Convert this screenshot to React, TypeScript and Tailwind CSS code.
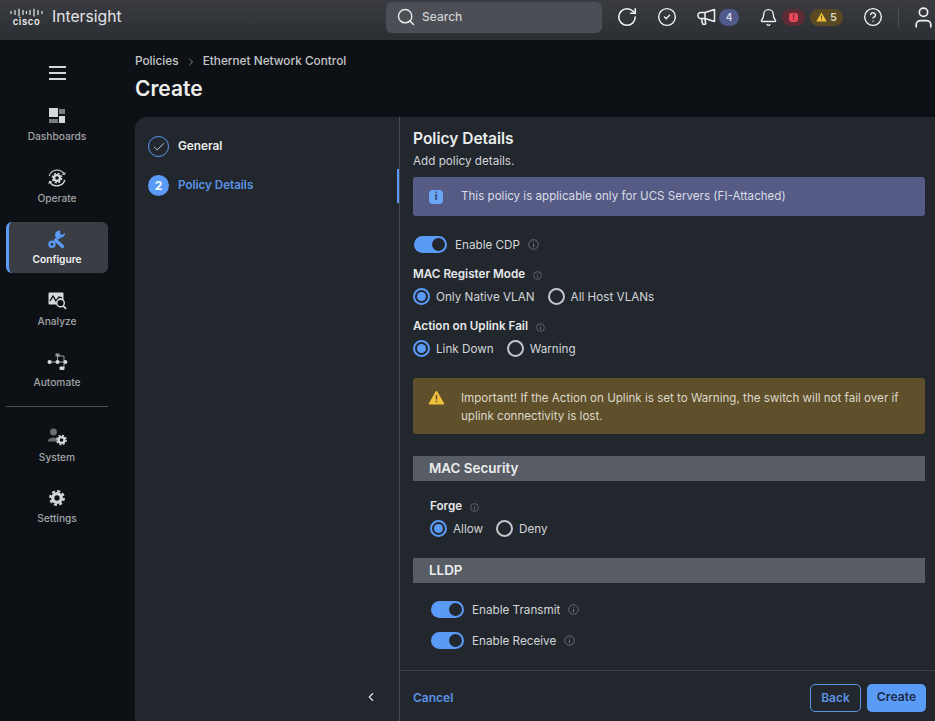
import { Bell, ChevronLeft, ChevronRight, CircleCheck, CircleHelp, Check, RotateCw, Search, User } from 'lucide-react';
import type { ReactNode } from 'react';

const BLUE = '#5b9bf8';

// gear drawn from a ring and a dashed ring for the teeth
const Gear = ({ x = 12, y = 12, k = 1, color = '#d4d6d9' }: { x?: number; y?: number; k?: number; color?: string }) => (
  <g transform={`translate(${x} ${y}) scale(${k})`} fill="none" stroke={color}>
    <circle r="5.2" strokeWidth="4" />
    <circle r="8.2" strokeWidth="2.6" strokeDasharray="3.6 2.84" />
  </g>
);

const MegaphoneIcon = () => (
  <svg width="19" height="18" viewBox="0 0 19 18" fill="none" stroke="#f0f1f2" strokeWidth="1.5" strokeLinejoin="round" className="ml-[20px] shrink-0">
    <path d="M17.5 1.5 V13.5 L8 10.5 H3.5 A2.5 2.5 0 0 1 1 8 V7 A2.5 2.5 0 0 1 3.5 4.5 H8 Z" />
    <path d="M8 4.5 V10.5" />
    <path d="M4.5 10.5 L5.5 15.5 A1 1 0 0 0 6.5 16.3 H7.8 A1 1 0 0 0 8.7 15.2 L7.8 10.5" />
  </svg>
);

const DashboardsIcon = () => (
  <svg width="18" height="18" viewBox="0 0 18 18">
    <rect x="1" y="1" width="9" height="9" fill="#d6d8da" />
    <rect x="11" y="2" width="6" height="5" fill="#777a7e" />
    <rect x="1" y="12" width="9" height="4" fill="#777a7e" />
    <rect x="11" y="9" width="6" height="7" fill="#d6d8da" />
  </svg>
);

const OperateIcon = () => (
  <svg width="22" height="22" viewBox="0 0 24 24" fill="none">
    <path d="M3.5 10 A9 9 0 0 1 20 8" stroke="#b9bbbe" strokeWidth="1.4" />
    <path d="M20.5 14 A9 9 0 0 1 4 16" stroke="#d6d8da" strokeWidth="1.6" />
    <path d="M21.5 5.5 L20.5 9 L17 8 Z" fill="#b9bbbe" />
    <path d="M2.5 18.5 L3.5 15 L7 16 Z" fill="#d6d8da" />
    <Gear k={0.62} />
  </svg>
);

const ConfigureIcon = () => (
  <svg width="20" height="20" viewBox="0 0 20 20" fill="none">
    <path d="M8.5 11 L15.5 17.5" stroke={BLUE} strokeWidth="3.2" strokeLinecap="round" />
    <path d="M13.4 1.5 A4.5 4.5 0 0 0 8.2 7.4 L10.5 11 L14 8.5 A4.5 4.5 0 0 0 18 4 L15.2 6 L12.8 4.6 Z" fill={BLUE} />
    <circle cx="5" cy="15.2" r="2.6" stroke={BLUE} strokeWidth="2.2" />
  </svg>
);

const AnalyzeIcon = () => (
  <svg width="19" height="18" viewBox="0 0 19 18" fill="none">
    <rect x="0.5" y="0.5" width="15" height="12" rx="1" fill="#d6d8da" />
    <path d="M2 9 L5 4 L8 9 L11 5 L14 6" stroke="#0d1115" strokeWidth="1.4" />
    <circle cx="12.5" cy="11" r="3.8" fill="#0d1115" stroke="#d6d8da" strokeWidth="1.4" />
    <path d="M15.2 13.8 L18 16.8" stroke="#d6d8da" strokeWidth="1.7" />
  </svg>
);

const AutomateIcon = () => (
  <svg width="21" height="20" viewBox="0 0 21 20" fill="none">
    <path d="M3 10 H19 M10.5 10 V4 H14 H17 V16 H14" stroke="#9a9c9f" strokeWidth="1" />
    <circle cx="2.6" cy="10" r="2.1" fill="#d6d8da" />
    <circle cx="10.5" cy="10" r="2" fill="#d6d8da" />
    <circle cx="18.4" cy="10" r="2" fill="#d6d8da" />
    <rect x="8.5" y="1.5" width="4" height="3" fill="#9a9c9f" />
    <rect x="12.5" y="14.5" width="5" height="3.4" rx="1" fill="#d6d8da" />
  </svg>
);

const SystemIcon = () => (
  <svg width="20" height="18" viewBox="0 0 20 18">
    <circle cx="6.5" cy="4" r="3.4" fill="#6b6e72" />
    <path d="M1 13 C1 8.5 12 8.5 12 13 V13.5 H1 Z" fill="#6b6e72" />
    <Gear x={14.5} y={12} k={0.56} />
  </svg>
);

const SettingsIcon = () => (
  <svg width="20" height="20" viewBox="0 0 24 24">
    <Gear />
  </svg>
);

const CiscoLogo = () => (
  <div className="flex flex-col items-center w-[33px]">
    <svg width="33" height="9" viewBox="0 0 33 9" fill="none" stroke="#e8e9ea" strokeWidth="1.2" strokeLinecap="round">
      {[
        [1, 3.5, 5.5],
        [5, 2.5, 6.5],
        [9, 1, 8],
        [13, 2.5, 6.5],
        [16.5, 3.5, 5.5],
        [20, 2.5, 6.5],
        [24, 1, 8],
        [28, 2.5, 6.5],
        [32, 3.5, 5.5],
      ].map(([x, a, b]) => (
        <line key={x} x1={x} x2={x} y1={a} y2={b} />
      ))}
    </svg>
    <span className="text-[9.5px] leading-[9px] font-semibold text-[#e8e9ea] tracking-[0.6px]">cisco</span>
  </div>
);

const NavItem = ({ icon, label, active }: { icon: ReactNode; label: string; active?: boolean }) => (
  <div
    className={
      active
        ? 'h-[51px] mx-[6px] rounded-md bg-[#3a3d44] border-l-[3px] border-[#5b9bf8] flex flex-col items-center justify-center gap-[3px] pr-[3px] text-[#f2f3f4] font-semibold'
        : 'h-[51px] mx-[6px] flex flex-col items-center justify-center gap-[3px] text-[#a1a3a6] font-medium'
    }
  >
    <div className="h-[20px] flex items-center justify-center">{icon}</div>
    <span className="text-[10.2px] leading-[14px]">{label}</span>
  </div>
);

const Hint = ({ size = 11 }: { size?: number }) => (
  <svg width={size} height={size} viewBox="0 0 12 12" fill="none" className="shrink-0">
    <circle cx="6" cy="6" r="5.2" stroke="#777b82" strokeWidth="0.9" />
    <path d="M6 5.2 V9 M6 3 V4" stroke="#777b82" strokeWidth="1" />
  </svg>
);

const Toggle = () => (
  <div className="w-[33px] h-[17px] rounded-full bg-[#5b9bf8] flex items-center justify-end pr-[2px]">
    <div className="w-[13px] h-[13px] rounded-full bg-[#22272e]" />
  </div>
);

const ToggleRow = ({ label, className = '' }: { label: string; className?: string }) => (
  <div className={`flex items-center h-[17px] ${className}`}>
    <Toggle />
    <span className="ml-2 pt-px text-[11.7px] leading-[17px] text-[#d3d5d8]">{label}</span>
    <span className="ml-2 flex"><Hint /></span>
  </div>
);

const Radio = ({ label, on }: { label: string; on?: boolean }) => (
  <div className="flex items-center h-[17px]">
    {on ? (
      <div className="w-[17px] h-[17px] rounded-full border-2 border-[#5b9bf8] flex items-center justify-center">
        <div className="w-[9px] h-[9px] rounded-full bg-[#5b9bf8]" />
      </div>
    ) : (
      <div className="w-[17px] h-[17px] rounded-full border-2 border-[#c4c6c9]" />
    )}
    <span className="ml-[6px] pt-px text-[11.7px] leading-[17px] text-[#d3d5d8]">{label}</span>
  </div>
);

const FieldLabel = ({ text, className = '' }: { text: string; className?: string }) => (
  <div className={`flex items-center h-[16px] ${className}`}>
    <span className="text-[11.7px] font-semibold text-[#e6e7e9]">{text}</span>
    <span className="ml-2 flex"><Hint size={9} /></span>
  </div>
);

const SectionBar = ({ text, className = '' }: { text: string; className?: string }) => (
  <div className={`h-[25px] bg-[#575c65] pl-[16px] flex items-center text-[13.4px] font-semibold text-[#eceded] ${className}`}>{text}</div>
);

export default function App() {
  return (
    <div className="w-[935px] h-[721px] overflow-hidden bg-[#0d1115] flex flex-col font-['Inter',sans-serif]">
      <header className="h-10 shrink-0 pb-[6px] bg-gradient-to-b from-[#3a3c41] to-[#2b2e33] flex items-center">
        <div className="w-[386px] shrink-0 flex items-center pl-[10px]">
          <CiscoLogo />
          <span className="ml-[9px] text-[15.7px] text-[#e4e5e7]">Intersight</span>
        </div>
        <div className="w-[216px] h-[31px] shrink-0 rounded-md bg-[#4b4e54] flex items-center pl-[10px] text-[#e4e5e7]">
          <Search size={20} strokeWidth={1.8} />
          <span className="ml-[6px] text-[12px] font-medium text-[#cfd1d3]">Search</span>
        </div>
        <RotateCw size={22} strokeWidth={1.7} className="ml-[14px] shrink-0 text-[#f0f1f2]" />
        <CircleCheck size={20} strokeWidth={1.7} className="ml-[19px] shrink-0 text-[#f0f1f2]" />
        <MegaphoneIcon />
        <span className="ml-[3px] w-5 h-[17px] shrink-0 rounded-full bg-[#515a8c] flex items-center justify-center text-[10px] font-semibold text-[#d8dae6]">4</span>
        <Bell size={19} strokeWidth={1.7} className="ml-[20px] shrink-0 text-[#f0f1f2]" />
        <span className="ml-[4px] w-[23px] h-[17px] shrink-0 rounded-full bg-[#5e2a33] flex items-center justify-center">
          <span className="w-[9px] h-[9px] rounded-[3px] bg-[#e8485c] flex items-center justify-center text-[7px] leading-none font-bold text-[#5e2a33]">!</span>
        </span>
        <span className="ml-[5px] w-[33px] h-[17px] shrink-0 rounded-full bg-[#5a4a24] flex items-center justify-center gap-[3px] text-[11px] font-semibold text-[#dcd6c2]">
          <svg width="11" height="10" viewBox="0 0 11 10">
            <path d="M5.5 0.5 L10.7 9.5 H0.3 Z" fill="#f0c23b" />
            <path d="M5.5 3.5 V6.5 M5.5 7.4 V8.4" stroke="#5a4a24" strokeWidth="1" />
          </svg>
          5
        </span>
        <CircleHelp size={20} strokeWidth={1.7} className="ml-[20px] shrink-0 text-[#f0f1f2]" />
        <div className="ml-[15px] w-px h-5 shrink-0 bg-[#4e5156]" />
        <User size={25} strokeWidth={1.6} className="ml-[12px] shrink-0 text-[#f0f1f2]" />
      </header>

      <div className="flex-1 flex min-h-0">
        <aside className="w-[135px] shrink-0 pr-[21px]">
          <div className="h-[59px] flex items-center justify-center pt-[6px]">
            <div className="w-[17px] flex flex-col gap-[4px]">
              <div className="h-[2px] bg-[#d4d6d9]" />
              <div className="h-[2px] bg-[#d4d6d9]" />
              <div className="h-[2px] bg-[#d4d6d9]" />
            </div>
          </div>
          <div className="flex flex-col gap-[10.5px]">
            <NavItem icon={<DashboardsIcon />} label="Dashboards" />
            <NavItem icon={<OperateIcon />} label="Operate" />
            <NavItem icon={<ConfigureIcon />} label="Configure" active />
            <NavItem icon={<AnalyzeIcon />} label="Analyze" />
            <NavItem icon={<AutomateIcon />} label="Automate" />
          </div>
          <div className="mx-[6px] mt-[10px] h-px bg-[#4a4d52]" />
          <div className="mt-[12.5px] flex flex-col gap-[10.5px]">
            <NavItem icon={<SystemIcon />} label="System" />
            <NavItem icon={<SettingsIcon />} label="Settings" />
          </div>
        </aside>

        <main className="flex-1 min-w-0 flex flex-col">
          <div className="h-[77px] shrink-0 pt-[14px]">
            <div className="flex items-center h-4 text-[11.8px] font-medium text-[#c4c6c9]">
              <span>Policies</span>
              <ChevronRight size={12} className="mx-[6px] text-[#85888c]" />
              <span>Ethernet Network Control</span>
            </div>
            <h1 className="mt-[4px] text-[21px] leading-[30px] font-semibold text-[#eceded]">Create</h1>
          </div>

          <div className="flex-1 min-h-0 flex bg-[#22272e] rounded-tl-xl">
            <div className="w-[264px] shrink-0 flex flex-col relative">
              <div className="pl-[13px] pt-[19px] flex flex-col gap-[18px]">
                <div className="flex items-center h-[21px]">
                  <div className="w-[21px] h-[21px] rounded-full border-[1.5px] border-[#5b9bf8] flex items-center justify-center">
                    <Check size={14} strokeWidth={1.6} className="text-[#c8daf5]" />
                  </div>
                  <span className="ml-[9px] pt-px text-[11.8px] font-semibold text-[#eceded]">General</span>
                </div>
                <div className="flex items-center h-[21px]">
                  <div className="w-[21px] h-[21px] rounded-full bg-[#5b9bf8] flex items-center justify-center text-[12px] font-bold text-[#f4f7fd]">2</div>
                  <span className="ml-[9px] pt-px text-[11.6px] font-semibold text-[#5b93e4]">Policy Details</span>
                </div>
              </div>
              <div className="absolute right-0 top-[52px] w-[2px] h-[34px] bg-[#5b9bf8]" />
              <div className="mt-auto h-[51px] pt-[3px] flex items-center justify-end pr-[21px] text-[#e0e1e3]">
                <ChevronLeft size={14} />
              </div>
            </div>

            <div className="flex-1 min-w-0 border-l border-[#454a52] flex flex-col">
              <div className="flex-1 min-h-0 pl-[13px] pr-[10px] pt-[12px]">
                <h2 className="text-[15.5px] leading-[20px] font-semibold text-[#eceded]">Policy Details</h2>
                <p className="mt-[3px] text-[11.7px] leading-[18px] text-[#d3d5d8]">Add policy details.</p>

                <div className="mt-[7px] h-[39px] rounded-[3px] bg-[#565b85] flex items-center pl-4 text-[11.6px] text-[#d9dbe6]">
                  <span className="w-[14px] h-[14px] rounded-[4px] bg-[#6ba5f5] flex items-center justify-center text-[10px] font-bold text-[#31406b]">i</span>
                  <span className="ml-[18px] pt-px">This policy is applicable only for UCS Servers (FI-Attached)</span>
                </div>

                <ToggleRow label="Enable CDP" className="mt-[20px] ml-px" />

                <FieldLabel text="MAC Register Mode" className="mt-[14px]" />
                <div className="mt-[5px] flex gap-[13px]">
                  <Radio label="Only Native VLAN" on />
                  <Radio label="All Host VLANs" />
                </div>

                <FieldLabel text="Action on Uplink Fail" className="mt-[14px]" />
                <div className="mt-[5px] flex gap-[13px]">
                  <Radio label="Link Down" on />
                  <Radio label="Warning" />
                </div>

                <div className="mt-[21px] h-[56px] rounded-[3px] bg-[#5f4f2b] flex pl-[15px] pr-4 items-center text-[11.6px] leading-[18px] text-[#dcd8c8]">
                  <svg width="17" height="15" viewBox="0 0 17 15" className="shrink-0 -mt-[18px]">
                    <path d="M8.5 1 L16 14 H1 Z" fill="#f0c23b" stroke="#f0c23b" strokeLinejoin="round" />
                    <path d="M8.5 5 V9.5 M8.5 10.8 V12.2" stroke="#5f4f2b" strokeWidth="1.5" />
                  </svg>
                  <p className="ml-[16px] pt-[2px]">Important! If the Action on Uplink is set to Warning, the switch will not fail over if uplink connectivity is lost.</p>
                </div>

                <SectionBar text="MAC Security" className="mt-[22px]" />
                <div className="pl-[17px]">
                  <FieldLabel text="Forge" className="mt-[18px]" />
                  <div className="mt-[5px] flex gap-[13px]">
                    <Radio label="Allow" on />
                    <Radio label="Deny" />
                  </div>
                </div>

                <SectionBar text="LLDP" className="mt-[21px]" />
                <div className="pl-[18px]">
                  <ToggleRow label="Enable Transmit" className="mt-[18px]" />
                  <ToggleRow label="Enable Receive" className="mt-[14px]" />
                </div>
              </div>

              <footer className="h-[51px] shrink-0 border-t border-[#3d4249] pt-[3px] flex items-center pl-[13px] pr-[9px]">
                <span className="text-[12px] font-semibold text-[#5b93e4]">Cancel</span>
                <button className="ml-auto h-[28px] w-[51px] rounded-[5px] border-[1.5px] border-[#5b93e4] text-[12px] font-semibold text-[#5b93e4]">Back</button>
                <button className="ml-[6px] h-[28px] w-[59px] rounded-[5px] bg-[#5b9bf8] text-[12.2px] font-semibold text-[#1b2a45]">Create</button>
              </footer>
            </div>
          </div>
        </main>
      </div>
    </div>
  );
}
